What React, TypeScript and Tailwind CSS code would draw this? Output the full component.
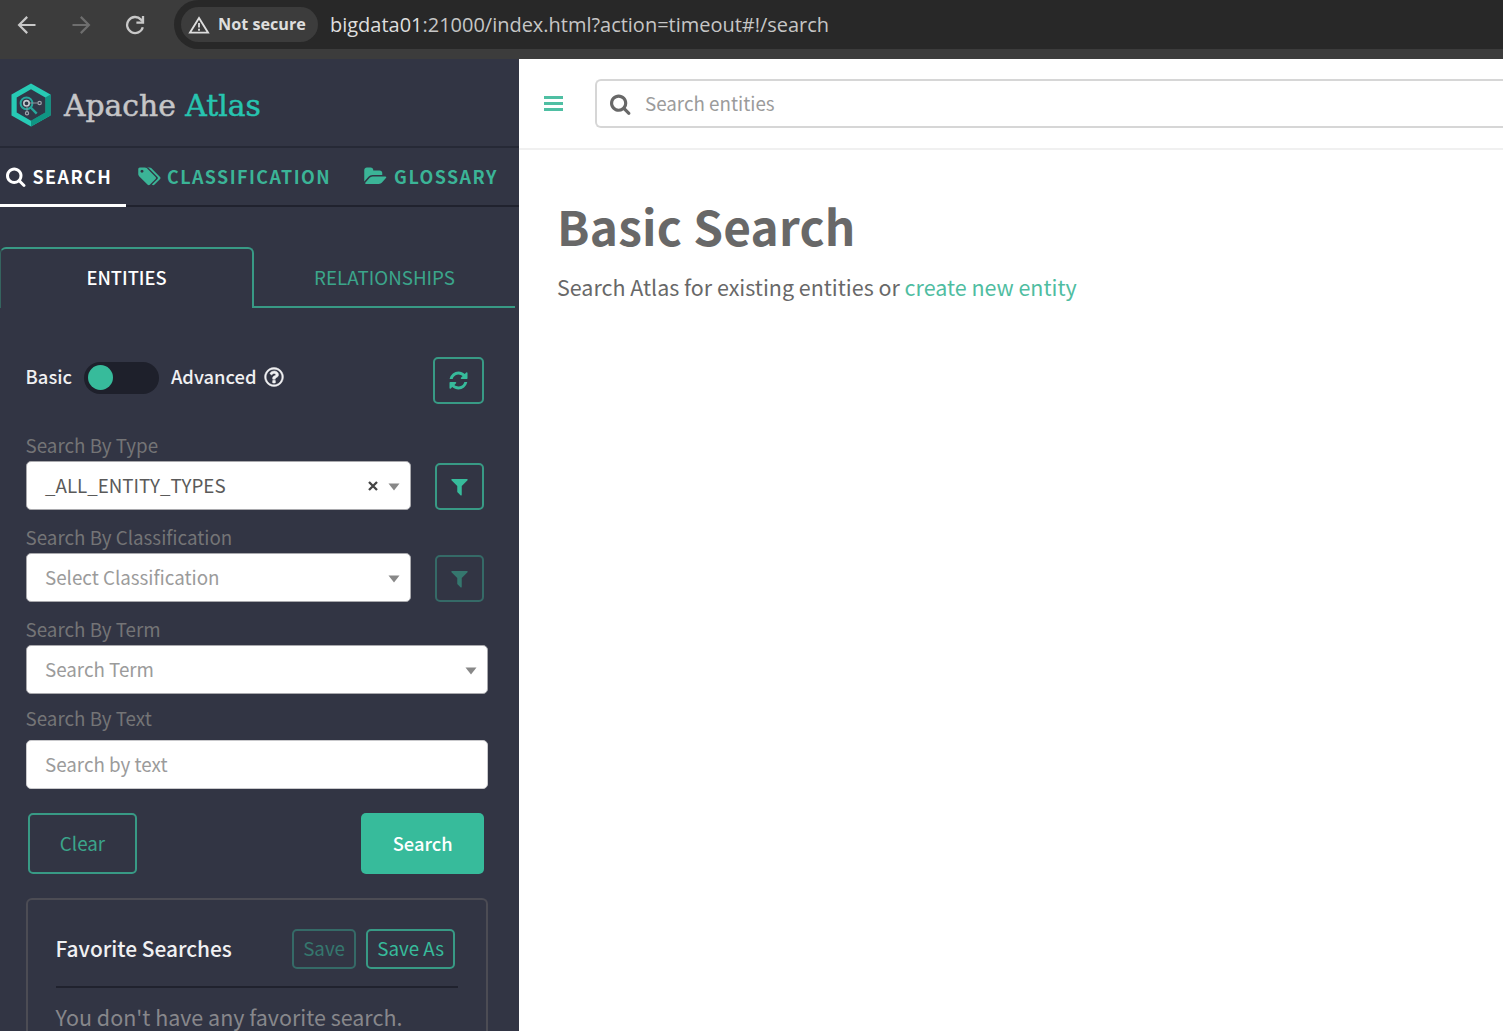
import type { ReactNode } from "react";

type IconProps = { className?: string };

function Glyph({ d, box = "0 0 1792 1792", className = "" }: { d: string; box?: string; className?: string }) {
  return (
    <svg viewBox={box} fill="currentColor" className={`shrink-0 ${className}`}>
      <path d={d} />
    </svg>
  );
}

const SEARCH =
  "M1152 832q0-185-131.5-316.5t-316.5-131.5-316.5 131.5-131.5 316.5 131.5 316.5 316.5 131.5 316.5-131.5 131.5-316.5zm512 832q0 52-38 90t-90 38q-54 0-90-38l-343-342q-179 124-399 124-143 0-273.5-55.5t-225-150-150-225-55.5-273.5 55.5-273.5 150-225 225-150 273.5-55.5 273.5 55.5 225 150 150 225 55.5 273.5q0 220-124 399l343 343q37 37 37 90z";
const FILTER =
  "M1595 295q17 41-14 70l-493 493v742q0 42-39 59-13 5-25 5-27 0-45-19l-256-256q-19-19-19-45v-486l-493-493q-31-29-14-70 17-39 59-39h1280q42 0 59 39z";
const REFRESH =
  "M1639 1056q0 5-1 7-64 268-268 434.5t-478 166.5q-146 0-282.5-55t-243.5-157l-129 129q-19 19-45 19t-45-19-19-45v-448q0-26 19-45t45-19h448q26 0 45 19t19 45-19 45l-137 137q71 66 161 102t187 36q134 0 250-65t186-179q11-17 53-117 8-23 30-23h192q13 0 22.5 9.5t9.5 22.5zm25-800v448q0 26-19 45t-45 19h-448q-26 0-45-19t-19-45 19-45l138-138q-148-137-349-137-134 0-250 65t-186 179q-11 17-53 117-8 23-30 23h-199q-13 0-22.5-9.5t-9.5-22.5v-7q65-268 270-434.5t480-166.5q146 0 284 55.5t245 156.5l130-129q19-19 45-19t45 19 19 45z";
const QUESTION =
  "M1008 1200v160q0 14-9 23t-23 9h-160q-14 0-23-9t-9-23v-160q0-14 9-23t23-9h160q14 0 23 9t9 23zm256-496q0 50-15 90t-45.5 69-52 44-59.5 36q-32 18-46.5 28t-26 24-11.5 29v32q0 14-9 23t-23 9h-160q-14 0-23-9t-9-23v-68q0-35 10.5-64.5t24-47.5 39-35.5 41-25.5 44.5-21q53-25 75-43t22-49q0-42-43.5-71.5t-95.5-29.5q-56 0-95 27-29 20-80 83-9 12-25 12-11 0-19-6l-108-82q-10-7-12-20t5-23q122-192 349-192 129 0 238.5 89.5t109.5 214.5zm-368-448q-130 0-248.5 51t-204 136.5-136.5 204-51 248.5 51 248.5 136.5 204 204 136.5 248.5 51 248.5-51 204-136.5 136.5-204 51-248.5-51-248.5-136.5-204-204-136.5-248.5-51zm768 640q0 209-103 385.5t-279.5 279.5-385.5 103-385.5-103-279.5-279.5-103-385.5 103-385.5 279.5-279.5 385.5-103 385.5 103 279.5 279.5 103 385.5z";
const TAGS =
  "M448 448q0-53-37.5-90.5t-90.5-37.5-90.5 37.5-37.5 90.5 37.5 90.5 90.5 37.5 90.5-37.5 37.5-90.5zm1067 576q0 53-37 90l-491 492q-39 37-91 37-53 0-90-37l-715-716q-38-37-64.5-101t-26.5-117v-416q0-52 38-90t90-38h416q53 0 117 26.5t102 64.5l715 714q37 39 37 91zm384 0q0 53-37 90l-491 492q-39 37-91 37-36 0-59-14t-53-45l470-470q37-37 37-90 0-52-37-91l-715-714q-38-38-102-64.5t-117-26.5h224q53 0 117 26.5t102 64.5l715 714q37 39 37 91z";
const FOLDER =
  "M1879 952q0 31-31 66l-336 396q-43 51-120.5 86.5t-143.5 35.5h-1088q-34 0-60.5-13t-26.5-43q0-31 31-66l336-396q43-51 120.5-86.5t143.5-35.5h1088q34 0 60.5 13t26.5 43zm-343-344v160h-832q-94 0-197 47.5t-164 119.5l-337 396-5 6q0-4-.5-12.5t-.5-12.5v-960q0-92 66-158t158-66h320q92 0 158 66t66 158v32h544q92 0 158 66t66 158z";

function ArrowIcon({ className = "" }: IconProps) {
  return (
    <svg viewBox="0 0 20 20" fill="none" stroke="currentColor" strokeWidth="2.2" className={`size-5 ${className}`}>
      <path d="M18.500 10H2.200M10.200 1.900 2.100 10l8.100 8.100" />
    </svg>
  );
}

function ReloadIcon({ className = "" }: IconProps) {
  return (
    <svg viewBox="0 0 20 20" fill="none" stroke="currentColor" strokeWidth="2.3" className={`size-5 ${className}`}>
      <path d="M17.800 12.200A8 8 0 1 1 16 4.600l1.600 1.700" />
      <path d="M18 1v6.600h-6.600" />
    </svg>
  );
}

function WarningIcon({ className = "" }: IconProps) {
  return (
    <svg viewBox="0 0 22 18" fill="none" stroke="currentColor" className={className}>
      <path d="M11 2 20 16.600H2Z" strokeWidth="1.9" />
      <path d="M11 7v4.600M11 12.800v2" strokeWidth="1.8" />
    </svg>
  );
}

function AtlasMark({ className = "" }: IconProps) {
  return (
    <svg viewBox="0 0 40 44" fill="none" className={className}>
      <path d="M20 .500 39.500 11.600v20.800L20 43.500.500 32.400V11.600Z" fill="#27cbb5" />
      <path d="M39.500 11.600v20.800L20 43.500v-5.800l14.300-8.200V14.500Z" fill="#0f9583" />
      <path d="M20 6.300 34.300 14.500v15L20 37.700 5.700 29.500v-15Z" fill="#303848" />
      <circle cx="15.500" cy="20.300" r="5.900" stroke="#27a79d" strokeWidth="2" />
      <path d="m19.700 24.500 6 6.200" stroke="#27a79d" strokeWidth="2.400" />
      <circle cx="15.500" cy="20.300" r="2.700" stroke="#c6c9cf" strokeWidth="1.600" />
      <path d="M19 20h7.500M16 23.500v5" stroke="#8d929c" strokeWidth="1" />
      <circle cx="28.600" cy="20" r="1.700" stroke="#9fa4ac" strokeWidth="1.200" />
      <circle cx="16" cy="30.300" r="1.600" stroke="#9fa4ac" strokeWidth="1.200" />
    </svg>
  );
}

function Caret() {
  return (
    <svg viewBox="0 0 12 8" className="mt-[3px] h-2 w-3 shrink-0 fill-[#888888]">
      <path d="M.500.500h11L6 7.500Z" />
    </svg>
  );
}

function Label({ children, className = "" }: { children: ReactNode; className?: string }) {
  return <div className={`h-[27px] leading-[27px] text-[#747476] ${className}`}>{children}</div>;
}

function SquareButton({ children, className = "", muted = false }: { children: ReactNode; className?: string; muted?: boolean }) {
  const tone = muted ? "border-[#356a67] text-[#35776e]" : "border-[#389a85] text-[#37bb9b]";
  return (
    <button disabled={muted} className={`flex items-center justify-center rounded-[5px] border-2 ${tone} ${className}`}>
      {children}
    </button>
  );
}

function BrowserBar() {
  return (
    <div className="flex h-[59px] items-start bg-[#3c3c3c]">
      <div className="flex h-[49px] w-[174px] shrink-0 items-center pl-[17px] text-[#c8c8c8]">
        <ArrowIcon />
        <ArrowIcon className="ml-[34px] rotate-180 text-[#6e6e6e]" />
        <ReloadIcon className="ml-[34px]" />
      </div>
      <div className="flex h-[49px] flex-1 items-center rounded-l-full bg-[#282828] pl-[7px] font-['Open_Sans'] text-[#dedede]">
        <div className="flex h-[35px] w-[137px] items-center rounded-full bg-[#3c3c3c] pl-[7px]">
          <WarningIcon className="h-[18px] w-[22px]" />
          <span className="-mt-px ml-[8px] text-[16.200px] font-bold whitespace-nowrap">Not secure</span>
        </div>
        <span className="ml-[12px] text-[19.980px] whitespace-nowrap">
          bigdata01<span className="text-[#c6c6c6]">:21000/index.html?action=timeout#!/search</span>
        </span>
      </div>
    </div>
  );
}

function Sidebar() {
  return (
    <aside className="flex w-[519px] shrink-0 flex-col bg-[#323544]">
      <div className="flex h-[89px] items-center border-b-2 border-[#262936] pt-1 pl-[11px]">
        <AtlasMark className="h-[44px] w-[40px]" />
        <span className="mt-[2px] ml-[13px] font-['DejaVu_Serif'] text-[29.800px] leading-none whitespace-pre text-[#c6c6c8] [-webkit-text-stroke:0.5px_currentColor]">
          Apache <span className="text-[#27c4b0]">Atlas</span>
        </span>
      </div>

      <nav className="flex h-[59px] border-b-2 border-[#20222e] text-[17.900px] leading-[56px] font-bold tracking-[1.450px] whitespace-nowrap text-[#3bb497]">
        <div className="flex h-[59px] w-[126px] items-center border-b-[3px] border-white pl-[6px] text-white">
          <Glyph d={SEARCH} className="size-[21px]" />
          <span className="ml-[5.500px]">SEARCH</span>
        </div>
        <div className="ml-[11.500px] flex h-[56px] items-center">
          <Glyph d={TAGS} box="0 0 1920 1792" className="h-[21px] w-[23px]" />
          <span className="ml-[6.500px]">CLASSIFICATION</span>
        </div>
        <div className="ml-[33px] flex h-[56px] items-center">
          <Glyph d={FOLDER} box="0 0 1920 1792" className="h-[21px] w-[23px]" />
          <span className="ml-[7px]">GLOSSARY</span>
        </div>
      </nav>

      <div className="mt-[40px] flex h-[61px] w-[515px] text-center leading-[56px]">
        <div className="w-[254px] rounded-t-[6px] border-2 border-b-0 border-l border-l-[#35645f] border-[#389a85] font-medium text-white">
          <span className="text-[18.300px]">ENTITIES</span>
        </div>
        <div className="flex-1 border-b-2 border-[#389a85] pt-[2px] text-[#3ba58b]">RELATIONSHIPS</div>
      </div>

      <div className="flex flex-1 flex-col pr-[31.400px] pl-[25.600px]">
        <div className="mt-[49px] flex h-[47px]">
          <div className="flex h-[40px] flex-1 items-center text-[18.350px] font-medium text-[#f0f0f2]">
            <span>Basic</span>
            <span className="mt-px ml-[12px] flex h-[32px] w-[75px] items-center rounded-full bg-[#1e202b] pl-[4px]">
              <span className="size-[25px] rounded-full bg-[#37bb9b]" />
            </span>
            <span className="ml-[12px]">Advanced</span>
            <Glyph d={QUESTION} className="ml-[6.500px] size-[22px] stroke-current stroke-[40]" />
          </div>
          <SquareButton className="mr-[3.500px] h-[47px] w-[51px]">
            <Glyph d={REFRESH} className="size-[21px]" />
          </SquareButton>
        </div>

        <Label className="mt-[27px]">Search By Type</Label>
        <div className="mt-[3px] flex h-[49px] items-end justify-between pr-[3.500px]">
          <div className="flex h-[49px] w-[385px] items-center rounded-[5px] border border-[#a9a9ad] bg-white pr-[10px] pl-[18.400px] text-[#5a5a5a]">
            <span className="flex-1">_ALL_ENTITY_TYPES</span>
            <svg viewBox="0 0 10 10" fill="none" className="mr-[10px] size-[10px] stroke-[#444444]" strokeWidth="2.300">
              <path d="m1 1 8 8M9 1 1 9" />
            </svg>
            <Caret />
          </div>
          <SquareButton className="h-[47px] w-[49.500px]">
            <Glyph d={FILTER} className="size-[21px]" />
          </SquareButton>
        </div>

        <Label className="mt-[13px]">Search By Classification</Label>
        <div className="mt-[3px] flex h-[49px] items-end justify-between pr-[3.500px]">
          <div className="flex h-[49px] w-[385px] items-center rounded-[5px] border border-[#a9a9ad] bg-white pr-[10px] pl-[18.400px] text-[#9b9b9b]">
            <span className="flex-1">Select Classification</span>
            <Caret />
          </div>
          <SquareButton muted className="h-[47px] w-[49.500px]">
            <Glyph d={FILTER} className="size-[21px]" />
          </SquareButton>
        </div>

        <Label className="mt-[13px]">Search By Term</Label>
        <div className="mt-[3px] flex h-[49px] items-center rounded-[5px] border border-[#a9a9ad] bg-white pr-[10px] pl-[18.400px] text-[#9b9b9b]">
          <span className="flex-1">Search Term</span>
          <Caret />
        </div>

        <Label className="mt-[10px]">Search By Text</Label>
        <div className="mt-[9px] flex h-[49px] items-center rounded-[5px] border border-[#c9c9cc] bg-white pl-[18.400px] text-[#9b9b9b]">
          Search by text
        </div>

        <div className="mt-[24px] mr-[3.500px] ml-[2.400px] flex h-[61px] justify-between">
          <SquareButton className="w-[109px]">
            <span className="text-[#3ba58b]">Clear</span>
          </SquareButton>
          <button className="w-[123px] rounded-[5px] bg-[#37bb9b] text-[18.300px] font-medium text-white">Search</button>
        </div>

        <section className="mt-[24px] h-[133px] rounded-t-[6px] border-2 border-b-0 border-[#4c4c54] px-[28px]">
          <div className="flex h-[88px] items-center border-b-2 border-[#20222e] pt-[14px] pr-[2.500px] pb-[2px]">
            <span className="flex-1 text-[20.900px] font-medium text-[#f0f0f2]">Favorite Searches</span>
            <SquareButton muted className="h-[40px] w-[64px] pb-[2px]">
              Save
            </SquareButton>
            <SquareButton className="ml-[10px] h-[40px] w-[89px] pb-[2px]">Save As</SquareButton>
          </div>
          <p className="mt-[16px] text-[21.480px] leading-[26px] whitespace-nowrap text-[#87878b]">You don't have any favorite search.</p>
        </section>
      </div>
    </aside>
  );
}

function Main() {
  return (
    <main className="flex-1 overflow-hidden bg-white">
      <header className="flex h-[91px] items-center border-b-2 border-[#f0f0f0] pl-[25px]">
        <div className="flex w-[19px] flex-col gap-[3px]">
          <span className="h-[3px] bg-[#4fbfa3]" />
          <span className="h-[3px] bg-[#4fbfa3]" />
          <span className="h-[3px] bg-[#4fbfa3]" />
        </div>
        <div className="ml-[32px] flex h-[49px] flex-1 items-center rounded-l-[6px] border-2 border-r-0 border-[#d6d6d6] pl-[13px]">
          <Glyph d={SEARCH} className="size-[22px] text-[#686868]" />
          <span className="ml-[13px] text-[#9b9b9b]">Search entities</span>
        </div>
      </header>
      <div className="pt-[41px] pl-[38px] text-[#686868]">
        <h1 className="text-[47.800px] leading-[70px] font-bold tracking-[0.200px]">Basic Search</h1>
        <p className="mt-[10px] text-[21.460px] leading-[32px]">
          Search Atlas for existing entities or <a className="text-[#4fbda1]">create new entity</a>
        </p>
      </div>
    </main>
  );
}

export default function App() {
  return (
    <div className="flex h-[1031px] w-[1503px] flex-col overflow-hidden font-['Noto_Sans_CJK_SC',sans-serif] text-[18.770px]">
      <BrowserBar />
      <div className="flex h-[972px] overflow-hidden">
        <Sidebar />
        <Main />
      </div>
    </div>
  );
}
